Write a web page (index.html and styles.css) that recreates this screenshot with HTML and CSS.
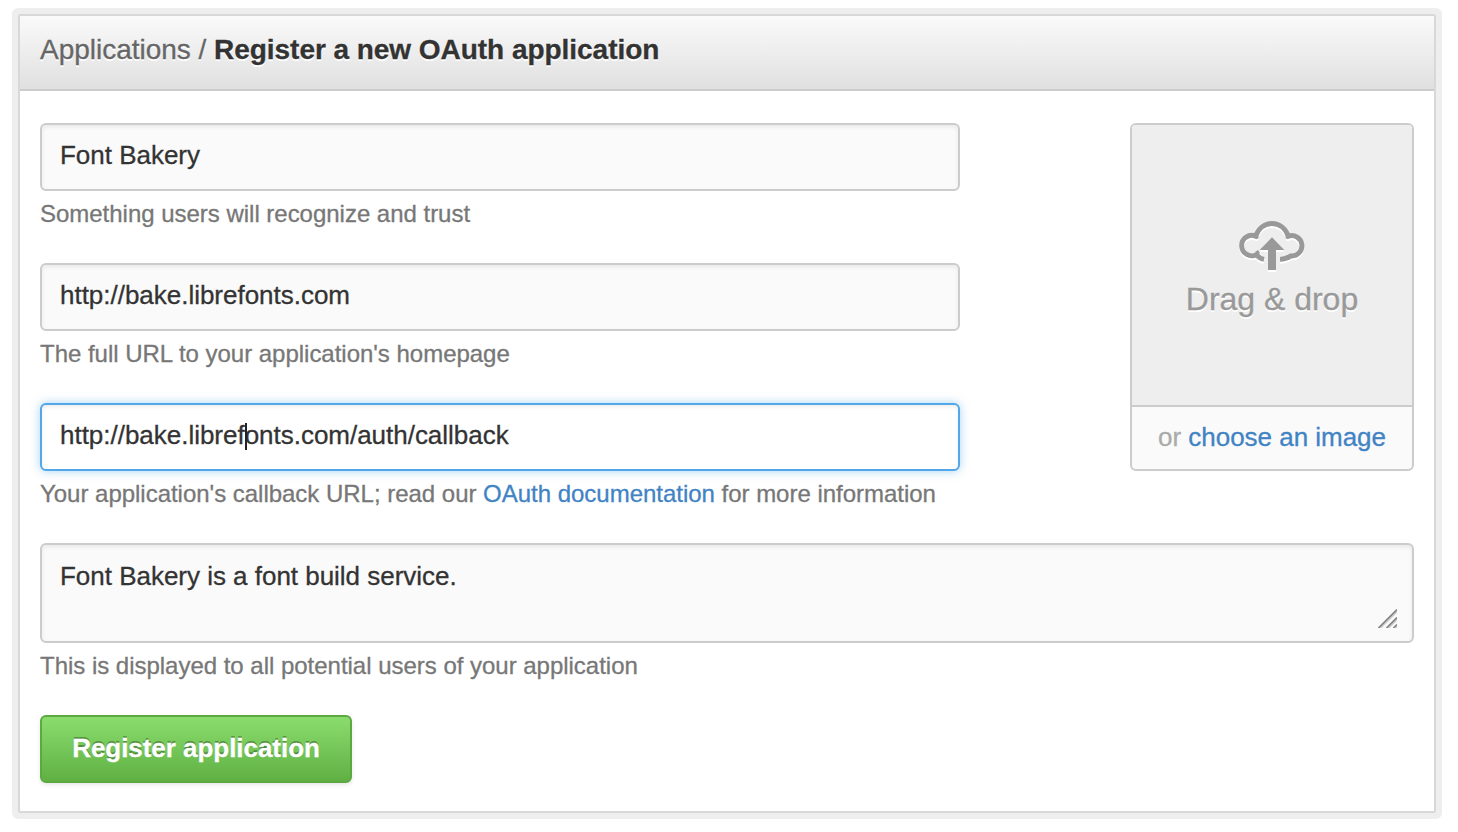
FILE: index.html
```
<!DOCTYPE html>
<html lang="en">
<head>
<meta charset="utf-8">
<title>Register a new OAuth application</title>
<link rel="stylesheet" href="styles.css">
</head>
<body>
<main class="panel">
  <header class="panel-header">
    <a class="crumb">Applications</a> <span class="slash">/</span> <strong class="title">Register a new OAuth application</strong>
  </header>
  <form class="panel-body">
    <div class="top">
      <div class="fields">
        <div class="field">
          <div class="control"><span class="value">Font Bakery</span></div>
          <p class="note">Something users will recognize and trust</p>
        </div>
        <div class="field">
          <div class="control"><span class="value">http://bake.librefonts.com</span></div>
          <p class="note">The full URL to your application's homepage</p>
        </div>
        <div class="field">
          <div class="control focused"><span class="value">http://bake.librefonts.com/auth/callback<i class="caret"></i></span></div>
          <p class="note">Your application's callback URL; read our <a class="link">OAuth documentation</a> for more information</p>
        </div>
      </div>
      <div class="uploader">
        <div class="drop">
          <svg class="cloud" width="68" height="54" viewBox="18 10 68 54" fill="none">
            <path d="M44 49.4C41 48.8 38.3 47.2 36.6 44.6A10.2 10.2 0 1 1 35.6 26.1C38.5 18.5 44.5 13.5 52 13.5C59.4 13.5 65.5 18.5 68.4 26.1A10.2 10.2 0 1 1 70.8 45.9C67.7 48 64 49.3 60 49.4" stroke="#999" stroke-width="4.9"/>
            <path d="M36.6 25L37 28.5M67.3 25V28.5M36 43.5L39 41.5" stroke="#999" stroke-width="3.4"/>
            <path d="M52 27.2L64.3 40H56V60H48V40H39.7Z" fill="#999"/>
          </svg>
          <span class="drop-label">Drag &amp; drop</span>
        </div>
        <div class="choose">or <a class="link">choose an image</a></div>
      </div>
    </div>
    <div class="field">
      <div class="control area">
        <span class="value">Font Bakery is a font build service.</span>
        <svg class="grip" width="20" height="20" viewBox="0 0 20 20" stroke-width="1.6">
          <path d="M3.5 20L20 3.5M11.5 20L20 11.5M18.5 20L20 18.5" stroke="#ccc"/>
          <path d="M1.5 20L20 1.5M9.5 20L20 9.5M16.5 20L20 16.5" stroke="#808080"/>
        </svg>
      </div>
      <p class="note">This is displayed to all potential users of your application</p>
    </div>
    <button class="submit" type="button">Register application</button>
  </form>
</main>
</body>
</html>
```
FILE: styles.css
```
* { box-sizing: border-box; }
body {
  margin: 0;
  min-height: 100vh;
  padding: 14px 22px 19px 18px;
  background: #fff;
  color: #333;
  font-family: "Liberation Sans", Arial, sans-serif;
  letter-spacing: -0.02px;
  white-space: nowrap;
  -webkit-text-stroke: 0.3px currentColor;
}
.panel {
  height: 799px;
  border: 2px solid #d8d8d8;
  border-radius: 2px;
  box-shadow: 0 0 0 6px #eee;
}
.panel-header {
  height: 75px;
  padding: 18px 20px 0;
  border-bottom: 2px solid #ccc;
  background: linear-gradient(#fafafa, #e0e0e0);
  font-size: 28px;
  line-height: 32px;
  text-shadow: 0 2px 0 #fff;
}
.crumb, .slash { color: #666; }
.title { letter-spacing: -0.04px; }
.panel-body { padding: 32px 20px 0; }
.top { display: flex; justify-content: space-between; }
.fields { width: 920px; }
.field { margin-bottom: 32px; }
.control {
  height: 68px;
  padding: 15px 18px;
  border: 2px solid #ccc;
  border-radius: 6px;
  background: #fafafa;
  box-shadow: inset 0 2px 4px rgba(0, 0, 0, .075);
  font-size: 26px;
  line-height: 30px;
}
.focused {
  border-color: #51a7e8;
  background: #fff;
  box-shadow: inset 0 2px 4px rgba(0, 0, 0, .075), 0 0 10px rgba(81, 167, 232, .5);
}
.value { position: relative; }
.caret {
  position: absolute;
  top: 3px;
  left: 185px;
  width: 2px;
  height: 27px;
  background: #222;
}
.note {
  height: 40px;
  margin: 0;
  padding-top: 9px;
  color: #777;
  font-size: 24px;
  line-height: 28px;
}
.link { color: #4183c4; }
.uploader {
  width: 284px;
  height: 348px;
  border: 2px solid #ccc;
  border-radius: 6px;
  background: #fafafa;
  overflow: hidden;
}
.drop {
  display: flex;
  flex-direction: column;
  align-items: center;
  height: 282px;
  padding-top: 95px;
  border-bottom: 2px solid #ccc;
  background: #eee;
  color: #999;
  font-size: 32px;
  line-height: 38px;
  text-shadow: 0 2px 0 #fff;
}
.cloud { flex: none; filter: drop-shadow(0 2px 0 #fff); }
.drop-label { margin-top: 6px; }
.choose {
  padding-top: 14px;
  color: #aaa;
  font-size: 26px;
  line-height: 32px;
  text-align: center;
}
.area { position: relative; height: 100px; padding-top: 16px; }
.grip { position: absolute; right: 15px; bottom: 13px; }
.submit {
  display: block;
  width: 312px;
  height: 68px;
  padding: 0 0 2px;
  border: 2px solid #5ca941;
  border-radius: 6px;
  background: linear-gradient(#8add6d, #60b044);
  box-shadow: 0 2px 4px rgba(0, 0, 0, .1);
  color: #fff;
  font: bold 26px/30px "Liberation Sans", Arial, sans-serif;
  letter-spacing: -0.04px;
  text-shadow: 0 -2px 0 rgba(0, 0, 0, .3);
}
```
